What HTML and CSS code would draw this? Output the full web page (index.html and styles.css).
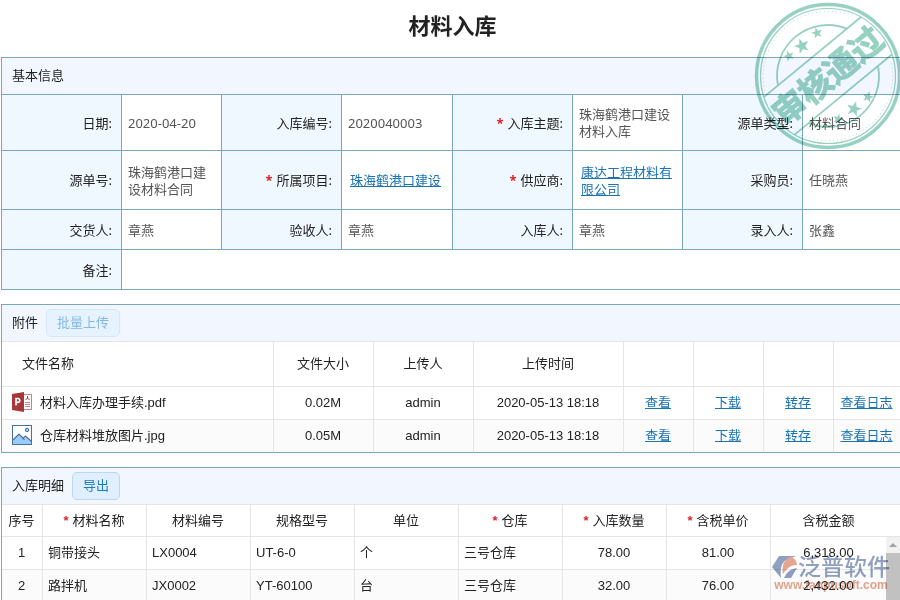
FILE: index.html
```html
<!DOCTYPE html>
<html lang="zh-CN">
<head>
    <meta charset="UTF-8">
    <meta name="viewport" content="width=device-width, initial-scale=1.0">
    <title>材料入库</title>
    <link rel="stylesheet" href="styles.css">
</head>
<body>
    <h1>材料入库</h1>

    <section class="panel">
        <div class="panel-head"><h2>基本信息</h2></div>
        <table class="info-table">
            <colgroup>
                <col class="w120"><col class="w100"><col class="w120"><col class="w111">
                <col class="w120"><col class="w110"><col class="w120"><col>
            </colgroup>
            <tr class="row-date">
                <th>日期:</th><td>2020-04-20</td>
                <th>入库编号:</th><td>2020040003</td>
                <th><i>*</i>入库主题:</th><td>珠海鹤港口建设材料入库</td>
                <th>源单类型:</th><td>材料合同</td>
            </tr>
            <tr class="row-source">
                <th>源单号:</th><td>珠海鹤港口建设材料合同</td>
                <th><i>*</i>所属项目:</th><td class="has-link"><a href="#">珠海鹤港口建设</a></td>
                <th><i>*</i>供应商:</th><td class="has-link"><a href="#">康达工程材料有限公司</a></td>
                <th>采购员:</th><td>任晓燕</td>
            </tr>
            <tr>
                <th>交货人:</th><td>章燕</td>
                <th>验收人:</th><td>章燕</td>
                <th>入库人:</th><td>章燕</td>
                <th>录入人:</th><td>张鑫</td>
            </tr>
            <tr>
                <th>备注:</th><td colspan="7"></td>
            </tr>
        </table>
    </section>

    <section class="panel">
        <div class="panel-head">
            <h2>附件</h2>
            <button class="btn" type="button" disabled>批量上传</button>
        </div>
        <table class="grid file-table">
            <colgroup>
                <col class="w272"><col class="w100"><col class="w100"><col class="w150">
                <col class="w70"><col class="w70"><col class="w70"><col>
            </colgroup>
            <tr>
                <th class="file-title">文件名称</th><th>文件大小</th><th>上传人</th><th>上传时间</th>
                <th></th><th></th><th></th><th></th>
            </tr>
            <tr>
                <td>
                    <div class="file-name">
                        <svg width="20" height="20" viewBox="0 0 20 20">
                            <rect x="11" y="2.500" width="8.500" height="15" fill="#fff" stroke="#c98586"/>
                            <path d="M13 10.500h5M13 12.500h5M13 14.500h5" stroke="#c98586"/>
                            <path d="M15.500 4v2l-2 2M15.500 6l2 2" fill="none" stroke="#a4373a"/>
                            <path d="M0 2l12-2v20L0 18z" fill="#a4373a"/>
                            <path d="M4 13.500V6.500h1.800a1.900 1.900 0 0 1 0 3.900H4" fill="none" stroke="#fff" stroke-width="1.600"/>
                        </svg>
                        材料入库办理手续.pdf
                    </div>
                </td>
                <td>0.02M</td><td>admin</td><td>2020-05-13 18:18</td>
                <td><a href="#">查看</a></td><td><a href="#">下载</a></td><td><a href="#">转存</a></td><td><a href="#">查看日志</a></td>
            </tr>
            <tr>
                <td>
                    <div class="file-name">
                        <svg width="20" height="20" viewBox="0 0 20 20">
                            <rect x=".5" y=".5" width="19" height="19" fill="#fff" stroke="#4a6f9c"/>
                            <path d="M1 15l6-6 5 5 2-2 5 4v3H1z" fill="#98ccfd"/>
                            <path d="M1 15l6-6 5.500 5.500M10.500 14l3-3 5.500 5" fill="none" stroke="#4a6f9c" stroke-width="1.200"/>
                            <circle cx="15" cy="5" r="1.700" fill="#98ccfd" stroke="#4a6f9c"/>
                        </svg>
                        仓库材料堆放图片.jpg
                    </div>
                </td>
                <td>0.05M</td><td>admin</td><td>2020-05-13 18:18</td>
                <td><a href="#">查看</a></td><td><a href="#">下载</a></td><td><a href="#">转存</a></td><td><a href="#">查看日志</a></td>
            </tr>
        </table>
    </section>

    <section class="panel">
        <div class="panel-head">
            <h2>入库明细</h2>
            <button class="btn" type="button">导出</button>
        </div>
        <table class="grid detail-table">
            <colgroup>
                <col class="w41"><col class="w104"><col class="w104"><col class="w104"><col class="w104">
                <col class="w104"><col class="w104"><col class="w104"><col>
            </colgroup>
            <tr>
                <th>序号</th><th><i>*</i>材料名称</th><th>材料编号</th><th>规格型号</th><th>单位</th>
                <th><i>*</i>仓库</th><th><i>*</i>入库数量</th><th><i>*</i>含税单价</th><th>含税金额</th>
            </tr>
            <tr>
                <td>1</td><td class="left">铜带接头</td><td class="left">LX0004</td><td class="left">UT-6-0</td><td class="left">个</td>
                <td class="left">三号仓库</td><td>78.00</td><td>81.00</td><td>6,318.00</td>
            </tr>
            <tr>
                <td>2</td><td class="left">路拌机</td><td class="left">JX0002</td><td class="left">YT-60100</td><td class="left">台</td>
                <td class="left">三号仓库</td><td>32.00</td><td>76.00</td><td>2,432.00</td>
            </tr>
        </table>
        <div class="scrollbar">
            <div class="scroll-up"></div>
            <div class="scroll-thumb"></div>
        </div>
    </section>

    <!-- 审核通过印章 -->
    <svg class="stamp" width="148" height="152" viewBox="0 0 148 152">
        <defs>
            <path id="star" d="M0-10 2.400-3.300 9.500-3.100 3.900 1.300 5.900 8.100 0 4 -5.900 8.100 -3.900 1.300 -9.500-3.100 -2.400-3.300z"/>
        </defs>
        <g transform="translate(75 76)" fill="none" stroke="#97d1c2">
            <circle r="71.500" stroke-width="3.500"/>
            <circle r="67.500" stroke-width="1.200"/>
            <g transform="rotate(-39.500)">
                <path d="M-63-24.500H63M-63 24H63" stroke-width="1.800"/>
                <path d="M-45-24A51 51 0 0 1 45-24M-45 24A51 51 0 0 0 45 24" stroke-width="1.800"/>
                <path d="M-58-29A65 65 0 0 1 58-29M-58 29A65 65 0 0 0 58 29" stroke-dasharray="1 3" opacity=".7"/>
                <text y="12" text-anchor="middle">审核通过</text>
            </g>
        </g>
        <g fill="#97d1c2">
            <use href="#star" transform="translate(36 56) rotate(-20) scale(.55)"/>
            <use href="#star" transform="translate(49 46) rotate(-20) scale(.8)"/>
            <use href="#star" transform="translate(64 33) rotate(-15) scale(.6)"/>
            <use href="#star" transform="translate(115 97) rotate(15) scale(.6)"/>
            <use href="#star" transform="translate(101 109) rotate(15) scale(.8)"/>
            <use href="#star" transform="translate(85 119) rotate(15) scale(.55)"/>
        </g>
    </svg>

    <div class="watermark">
        <div class="brand">
            <svg width="26" height="24" viewBox="0 0 26 24">
                <path d="M7 1h17L14 5C9 9 8 14 9 23L0 12z" fill="#8fa0c0"/>
                <path d="M11 19C9 9 14 3 19 2c4 1 6 5 6 8-6 0-9 2-14 9z" fill="#e6a58f"/>
                <path d="M12 23c3-6 6-9 13-10l-6 10z" fill="#8fa0c0"/>
            </svg>
            泛普软件
        </div>
        <div class="site">www.fanpusoft.com</div>
    </div>
</body>
</html>
```
FILE: styles.css
```css
* {
    box-sizing: border-box;
}
body {
    position: relative;
    height: 100vh;
    margin: 0;
    padding-left: 1px;
    overflow: hidden;
    background: #fff;
    color: #222;
    font: 13px/17px "Liberation Sans", "Noto Sans CJK SC", sans-serif;
}
h1 {
    height: 57px;
    margin: 0;
    padding-left: 4px;
    font-size: 22px;
    line-height: 54px;
    text-align: center;
}
h2 {
    margin: 0;
    font-size: 13px;
    font-weight: normal;
}
a {
    color: #1a73b5;
    text-underline-offset: 1px;
}
i {
    margin-right: 4px;
    color: #e02020;
    font-style: normal;
    font-weight: bold;
}
.panel {
    position: relative;
    margin-bottom: 14px;
    border: 1px solid #7aa7bd;
    border-width: 1px 0 0 1px;
}
.panel-head {
    display: flex;
    align-items: center;
    gap: 8px;
    height: 37px;
    padding-left: 10px;
    border-bottom: 1px solid #e3e5e8;
    background: #f1f6ff;
}
.panel-head h2 {
    padding-bottom: 2px;
}
.btn {
    height: 28px;
    padding: 0 10px 2px;
    border: 1px solid #b9d9ee;
    border-radius: 5px;
    background: #dfefff;
    color: #1a7cc2;
    font: inherit;
}
.btn:disabled {
    opacity: 0.5;
}
table {
    width: 100%;
    border-spacing: 0;
    table-layout: fixed;
}
th {
    font-weight: normal;
}
.w41 { width: 41px; }
.w70 { width: 70px; }
.w100 { width: 100px; }
.w104 { width: 104px; }
.w110 { width: 110px; }
.w111 { width: 111px; }
.w120 { width: 120px; }
.w150 { width: 150px; }
.w272 { width: 272px; }

/* 基本信息 */
.info-table {
    border-top: 1px solid #7aa7bd;
    margin-top: -1px;
    font-family: "Noto Sans", "Noto Sans CJK SC", sans-serif;
}
.info-table tr {
    height: 40px;
}
.info-table .row-date {
    height: 56px;
}
.info-table .row-source {
    height: 59px;
}
.info-table th,
.info-table td {
    padding: 1px 6px 0;
    border: 1px solid #7aa7bd;
    border-width: 0 1px 1px 0;
}
.info-table th {
    padding-right: 9px;
    background: #f0f8ff;
    text-align: right;
}
.info-table td {
    color: #555;
}
.info-table .has-link {
    padding-left: 8px;
}
.info-table tr > :last-child {
    border-right: 0;
}

/* 附件、入库明细 */
.grid th,
.grid td {
    height: 33px;
    padding: 0 5px 2px 4px;
    border: 1px solid #e3e5e8;
    border-width: 0 1px 1px 0;
    text-align: center;
}
.grid tr > :last-child {
    border-right: 0;
}
.grid tr:nth-child(3) td {
    background: #fbfbfb;
}
.file-table th {
    height: 45px;
}
.file-table tr:last-child td {
    border-bottom-color: #7aa7bd;
}
.grid .file-title {
    padding-left: 20px;
    text-align: left;
}
.file-name {
    display: flex;
    align-items: center;
    gap: 8px;
    padding-left: 6px;
}
.detail-table th {
    height: 32px;
    padding-bottom: 0;
}
.grid .left {
    padding-left: 5px;
    text-align: left;
}
.detail-table tr > :last-child {
    padding-right: 18px;
}
.scrollbar {
    position: absolute;
    top: 69px;
    right: 0;
    bottom: 0;
    width: 14px;
    background: #f1f1f1;
}
.scroll-up {
    width: 0;
    margin: 6px auto;
    border: 4px solid transparent;
    border-top: 0;
    border-bottom-color: #a3a3a3;
}
.scroll-thumb {
    height: 100%;
    background: #c1c1c1;
}

.stamp {
    position: absolute;
    top: 0;
    right: -1px;
    mix-blend-mode: multiply;
    pointer-events: none;
}
.stamp text {
    fill: #97d1c2;
    font: bold 33px "Noto Sans CJK SC", sans-serif;
}
.watermark {
    position: absolute;
    right: 10px;
    bottom: 9px;
    mix-blend-mode: multiply;
    pointer-events: none;
}
.brand {
    display: flex;
    align-items: center;
    color: #8fa0c0;
    font-size: 23px;
    font-weight: 500;
    line-height: 24px;
}
.site {
    color: #e6a58f;
    font: bold 12px/12px "Liberation Sans", sans-serif;
    text-align: center;
}
```
